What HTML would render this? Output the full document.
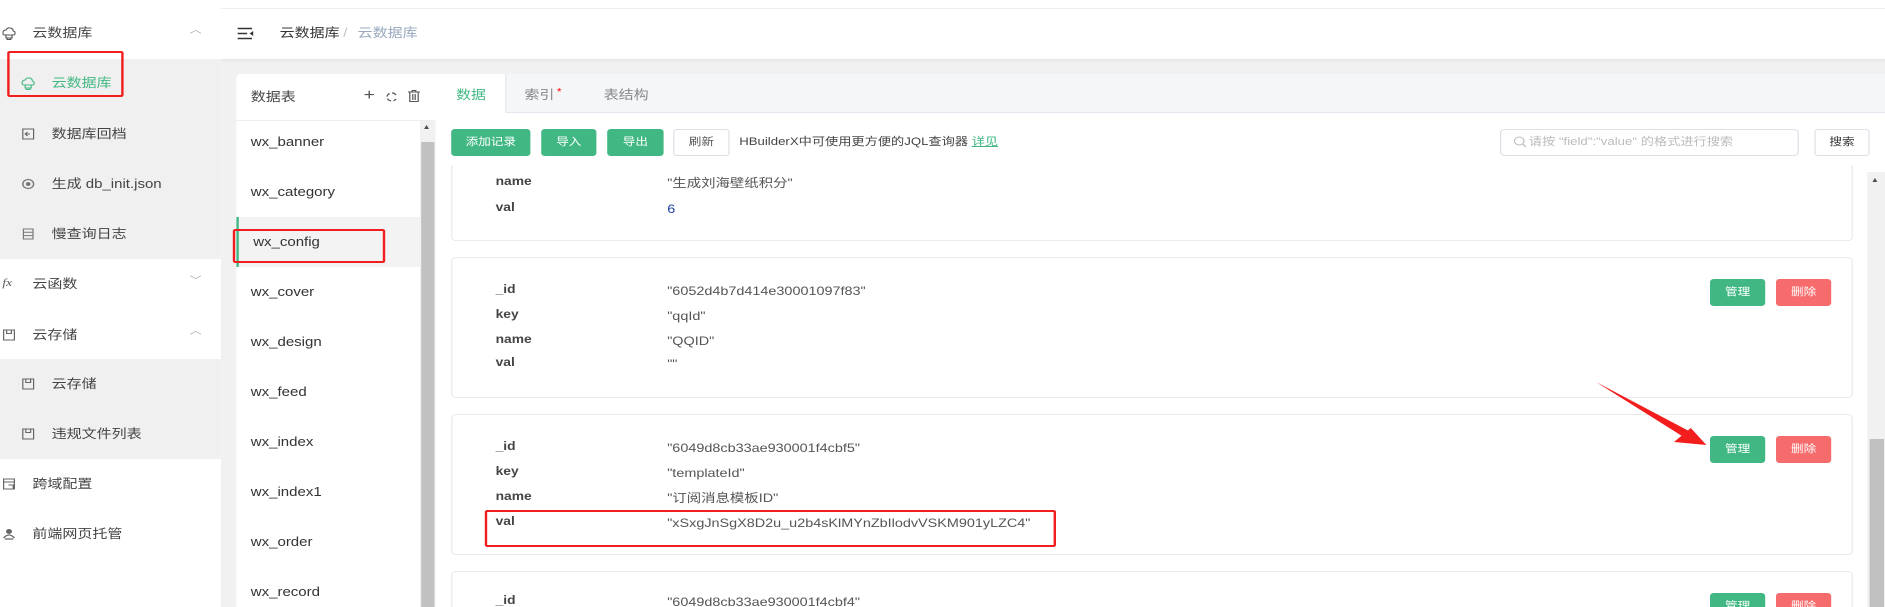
<!DOCTYPE html>
<html><head><meta charset="utf-8"><style>
*{box-sizing:border-box;margin:0;padding:0}
html,body{width:1885px;height:607px;overflow:hidden;background:#fff}
body{font-family:"Liberation Sans","Noto Sans CJK SC",sans-serif;color:#333}
#w{position:absolute;left:0;top:0;width:1571px;height:607px;transform:scale(1.2,1);transform-origin:0 0;overflow:hidden}
.a{position:absolute;line-height:1;white-space:nowrap}
.side{position:absolute;left:0;top:0;width:184px;height:607px;background:#fff}
.t13{font-size:12.5px}
.g{color:#41b883}
.btn{position:absolute;height:27px;border-radius:3px;font-size:10.5px;line-height:27px;text-align:center;color:#fff}
.bg{background:#41b883}.br{background:#f66c6c}
.card{position:absolute;left:13px;width:1168px;height:141px;background:#fff;border:1px solid #e8eaf0;border-radius:4px}
.k{position:absolute;left:36px;font-size:11.5px;font-weight:bold;color:#444;line-height:1}
.v{position:absolute;left:179px;font-size:12px;color:#555;line-height:1;white-space:nowrap}
.li{position:absolute;left:12px;font-size:12.5px;color:#333;line-height:1}
.red{position:absolute;border:2.5px solid #f21d1d;border-radius:2px}
</style></head><body><div id="w">
<div style="position:absolute;left:0;top:8px;width:1571px;height:1px;background:#eee"></div>
<div style="position:absolute;left:184px;top:59px;width:1387px;height:548px;background:#f1f1f1"></div>
<div style="position:absolute;left:184px;top:59px;width:1387px;height:4px;background:linear-gradient(#e6e6e6,#f1f1f1)"></div>
<div class="side">
 <div style="position:absolute;left:0;top:59px;width:184px;height:200px;background:#f0f0f0"></div>
 <div style="position:absolute;left:0;top:359px;width:184px;height:100px;background:#f0f0f0"></div>
 <svg class="a" style="left:2px;top:27px" width="11" height="13" viewBox="0 0 11 13"><path d="M2 8 Q0 8 0.5 5 Q1 3 3 3 Q4 0.5 6.5 1 Q9 1.5 9 4 Q11 4.5 10.5 7 Q10 8 9 8Z M3 8v3h5v-3 M4 11v1.5h3v-1.5" fill="none" stroke="#555" stroke-width="1"/></svg>
 <div class="a t13" style="left:27px;top:27px;color:#444">云数据库</div>
 <div class="a" style="left:158px;top:26px;font-size:10px;color:#aaa">︿</div>
 <svg class="a" style="left:18px;top:77px" width="11" height="13" viewBox="0 0 11 13"><path d="M2 8 Q0 8 0.5 5 Q1 3 3 3 Q4 0.5 6.5 1 Q9 1.5 9 4 Q11 4.5 10.5 7 Q10 8 9 8Z M3 8v3h5v-3 M4 11v1.5h3v-1.5" fill="none" stroke="#41b883" stroke-width="1"/></svg>
 <div class="a t13 g" style="left:43px;top:77px">云数据库</div>
 <svg class="a" style="left:18px;top:128px" width="11" height="12" viewBox="0 0 11 12"><path d="M1 1h9v10h-9z M7 6h-4 M5 4l-2 2 2 2" fill="none" stroke="#666" stroke-width="1"/></svg>
 <div class="a t13" style="left:43px;top:128px;color:#444">数据库回档</div>
 <svg class="a" style="left:18px;top:178px" width="11" height="12" viewBox="0 0 11 12"><circle cx="5.5" cy="6" r="4.5" fill="none" stroke="#777" stroke-width="1.2"/><circle cx="5.5" cy="6" r="2" fill="#777"/></svg>
 <div class="a t13" style="left:43px;top:178px;color:#444">生成 db_init.json</div>
 <svg class="a" style="left:18px;top:228px" width="11" height="12" viewBox="0 0 11 12"><path d="M1.5 1h8v10h-8z M1.5 4.3h8 M1.5 7.6h8" fill="none" stroke="#777" stroke-width="1"/></svg>
 <div class="a t13" style="left:43px;top:228px;color:#444">慢查询日志</div>
 <div class="a" style="left:2px;top:278px;font-size:11px;color:#555;font-family:'Liberation Serif',serif;font-style:italic">fx</div>
 <div class="a t13" style="left:27px;top:278px;color:#444">云函数</div>
 <div class="a" style="left:158px;top:277px;font-size:10px;color:#aaa">﹀</div>
 <svg class="a" style="left:2px;top:329px" width="11" height="12" viewBox="0 0 11 12"><path d="M1 1h9v10h-9z M3.5 1v3.5h4v-3.5" fill="none" stroke="#666" stroke-width="1"/></svg>
 <div class="a t13" style="left:27px;top:329px;color:#444">云存储</div>
 <div class="a" style="left:158px;top:327px;font-size:10px;color:#aaa">︿</div>
 <svg class="a" style="left:18px;top:378px" width="11" height="12" viewBox="0 0 11 12"><path d="M1 1h9v10h-9z M3.5 1v3.5h4v-3.5" fill="none" stroke="#666" stroke-width="1"/></svg>
 <div class="a t13" style="left:43px;top:378px;color:#444">云存储</div>
 <svg class="a" style="left:18px;top:428px" width="11" height="12" viewBox="0 0 11 12"><path d="M1 1h9v10h-9z M3.5 1v3.5h4v-3.5" fill="none" stroke="#666" stroke-width="1"/></svg>
 <div class="a t13" style="left:43px;top:428px;color:#444">违规文件列表</div>
 <svg class="a" style="left:2px;top:478px" width="11" height="12" viewBox="0 0 11 12"><path d="M1 1h9v10h-9z M1 4h9 M5 7h4v4" fill="none" stroke="#666" stroke-width="1"/></svg>
 <div class="a t13" style="left:27px;top:478px;color:#444">跨域配置</div>
 <svg class="a" style="left:2px;top:528px" width="11" height="12" viewBox="0 0 11 12"><circle cx="5.5" cy="3.5" r="2.5" fill="#666"/><path d="M1 10 Q5.5 4 10 10 M2 11h7" fill="none" stroke="#666" stroke-width="1.3"/></svg>
 <div class="a t13" style="left:27px;top:528px;color:#444">前端网页托管</div>
</div>
<div class="red" style="left:6px;top:51px;width:97px;height:46px"></div>
<svg class="a" style="left:198px;top:27px" width="14" height="13" viewBox="0 0 14 13"><path d="M0 1.5h12 M0 6.5h8 M0 11.5h12" stroke="#333" stroke-width="1.6"/><path d="M13 4v5l-3-2.5z" fill="#333"/></svg>
<div class="a t13" style="left:233px;top:27px;color:#333">云数据库</div>
<div class="a t13" style="left:286px;top:27px;color:#c0c4cc">/</div>
<div class="a t13" style="left:298px;top:27px;color:#97a8be">云数据库</div>
<div style="position:absolute;left:197px;top:74px;width:166px;height:533px;background:#fff;border-radius:4px 0 0 0"></div>
<div class="a t13" style="left:209px;top:91px;color:#444">数据表</div>
<div style="position:absolute;left:197px;top:120px;width:166px;height:1px;background:#eee"></div>
<div class="a" style="left:303px;top:88px;font-size:16px;color:#555">+</div>
<svg class="a" style="left:321px;top:91px" width="11" height="12" viewBox="0 0 11 12"><path d="M9 4 A4 4 0 1 0 9 8" fill="none" stroke="#555" stroke-width="1.2" stroke-dasharray="4 2"/></svg>
<svg class="a" style="left:340px;top:90px" width="10" height="12" viewBox="0 0 10 12"><path d="M0 2h10 M3.5 2v-1.5h3v1.5 M1.5 2v9.5h7v-9.5 M4 4v6 M6 4v6" fill="none" stroke="#555" stroke-width="1"/></svg>
<div style="position:absolute;left:197px;top:121px;width:153px;height:486px">
 <div style="position:absolute;left:0;top:96px;width:153px;height:50px;background:#f3f3f3;border-left:2px solid #41b883"></div>
 <div class="li" style="top:15px">wx_banner</div>
 <div class="li" style="top:65px">wx_category</div>
 <div class="li g" style="top:115px;left:14px">wx_config</div>
 <div class="li" style="top:165px">wx_cover</div>
 <div class="li" style="top:215px">wx_design</div>
 <div class="li" style="top:265px">wx_feed</div>
 <div class="li" style="top:315px">wx_index</div>
 <div class="li" style="top:365px">wx_index1</div>
 <div class="li" style="top:415px">wx_order</div>
 <div class="li" style="top:465px">wx_record</div>
</div>
<div style="position:absolute;left:350px;top:121px;width:13px;height:486px;background:#f1f1f1"></div>
<div style="position:absolute;left:351px;top:142px;width:11px;height:465px;background:#c1c1c1"></div>
<div class="a" style="left:352px;top:124px;font-size:7px;color:#505050">▲</div>
<div class="red" style="left:194px;top:229px;width:127px;height:34px"></div>
<div style="position:absolute;left:363px;top:74px;width:1208px;height:533px;background:#fff"></div>
<div style="position:absolute;left:421px;top:74px;width:1150px;height:39px;background:#f5f6f8;border-bottom:1px solid #e4e7ed;border-left:1px solid #e4e7ed"></div>
<div class="a t13 g" style="left:380px;top:89px">数据</div>
<div class="a t13" style="left:437px;top:89px;color:#888">索引<span style="color:#f00;font-size:10px;position:relative;top:-4px;margin-left:2px">*</span></div>
<div class="a t13" style="left:503px;top:89px;color:#888">表结构</div>
<div class="btn bg" style="left:376px;top:129px;width:66px">添加记录</div>
<div class="btn bg" style="left:451px;top:129px;width:46px">导入</div>
<div class="btn bg" style="left:506px;top:129px;width:47px">导出</div>
<div class="btn" style="left:561px;top:129px;width:47px;background:#fff;border:1px solid #dcdfe6;color:#555;line-height:25px">刷新</div>
<div class="a" style="left:616px;top:137px;font-size:11px;color:#444">HBuilderX中可使用更方便的JQL查询器 <span class="g" style="text-decoration:underline">详见</span></div>
<div style="position:absolute;left:1250px;top:129px;width:249px;height:27px;border:1px solid #dcdfe6;border-radius:4px;background:#fff"></div>
<svg class="a" style="left:1261px;top:136px" width="11" height="12" viewBox="0 0 11 12"><circle cx="5" cy="5" r="4" fill="none" stroke="#bbb" stroke-width="1"/><path d="M8 8l2.5 3" stroke="#bbb" stroke-width="1"/></svg>
<div class="a" style="left:1274px;top:137px;font-size:11px;color:#bbb">请按 "field":"value" 的格式进行搜索</div>
<div class="btn" style="left:1512px;top:129px;width:46px;background:#fff;border:1px solid #dcdfe6;color:#333;line-height:25px">搜索</div>
<div style="position:absolute;left:363px;top:165px;width:1193px;height:442px;overflow:hidden">
 <div style="position:absolute;left:0;top:-165px;width:1193px;height:607px">
 <div class="card" style="top:100px">
  <div class="k" style="top:27px">_id</div><div class="k" style="top:52px">key</div>
  <div class="k" style="top:76px">name</div><div class="v" style="top:76px">"生成刘海壁纸积分"</div>
  <div class="k" style="top:102px">val</div><div class="v" style="top:102px;color:#1a3fa3">6</div>
 </div>
 <div class="card" style="top:257px">
  <div class="k" style="top:27px">_id</div><div class="v" style="top:27px">"6052d4b7d414e30001097f83"</div>
  <div class="k" style="top:52px">key</div><div class="v" style="top:52px">"qqId"</div>
  <div class="k" style="top:77px">name</div><div class="v" style="top:77px">"QQID"</div>
  <div class="k" style="top:100px">val</div><div class="v" style="top:100px">""</div>
  <div class="btn bg" style="left:1048px;top:21px;width:46px">管理</div>
  <div class="btn br" style="left:1103px;top:21px;width:46px">删除</div>
 </div>
 <div class="card" style="top:414px">
  <div class="k" style="top:27px">_id</div><div class="v" style="top:27px">"6049d8cb33ae930001f4cbf5"</div>
  <div class="k" style="top:52px">key</div><div class="v" style="top:52px">"templateId"</div>
  <div class="k" style="top:77px">name</div><div class="v" style="top:77px">"订阅消息模板ID"</div>
  <div class="k" style="top:102px">val</div><div class="v" style="top:102px">"xSxgJnSgX8D2u_u2b4sKlMYnZbIlodvVSKM901yLZC4"</div>
  <div class="btn bg" style="left:1048px;top:21px;width:46px">管理</div>
  <div class="btn br" style="left:1103px;top:21px;width:46px">删除</div>
 </div>
 <div class="card" style="top:571px">
  <div class="k" style="top:24px">_id</div><div class="v" style="top:24px">"6049d8cb33ae930001f4cbf4"</div>
  <div class="btn bg" style="left:1048px;top:21px;width:46px">管理</div>
  <div class="btn br" style="left:1103px;top:21px;width:46px">删除</div>
 </div>
 </div>
</div>
<div style="position:absolute;left:1556px;top:172px;width:15px;height:435px;background:#f1f1f1"></div>
<div style="position:absolute;left:1558px;top:439px;width:12px;height:168px;background:#c1c1c1"></div>
<div class="a" style="left:1559px;top:177px;font-size:7px;color:#505050">▲</div>
<div class="red" style="left:404px;top:510px;width:476px;height:37px"></div>
<svg class="a" style="left:1325px;top:378px" width="100" height="72" viewBox="0 0 100 72"><path d="M5 4 L84 54 L78 59 Z" fill="#f21d1d"/><path d="M97 67 L70 64 L84 50 Z" fill="#f21d1d"/></svg>
</div></body></html>
